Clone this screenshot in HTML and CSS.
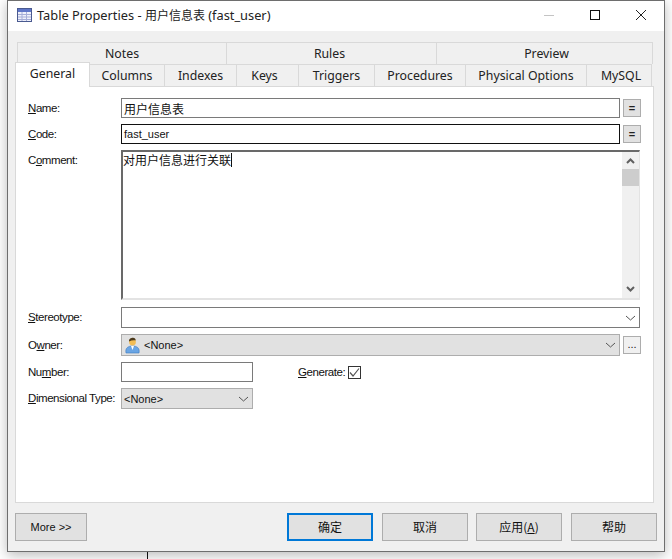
FILE: index.html
```html
<!DOCTYPE html>
<html lang="zh">
<head>
<meta charset="utf-8">
<title>Table Properties</title>
<link rel="stylesheet" href="styles.css">
</head>
<body>
<div class="stray-line"></div>
<div class="window">
  <header class="titlebar">
    <svg class="table-icon" width="15" height="14" viewBox="0 0 15 14">
      <rect x="0.5" y="0.5" width="14" height="13" fill="#eef0fb" stroke="#4a5a90"/>
      <rect x="1" y="1" width="13" height="3" fill="#5f76c8"/>
      <path d="M1 6.500H14M1 9H14M1 11.500H14M5 4V13M9.500 4V13" stroke="#a6aed8" stroke-width="1" fill="none"/>
    </svg>
    <span class="title">Table Properties - <span class="title-cjk">用户信息表</span> (fast_user)</span>
    <div class="controls">
      <svg width="12" height="12" viewBox="0 0 12 12" class="ctl-min"><path d="M1 6.500H11" stroke="#c4c4c4" fill="none"/></svg>
      <svg width="12" height="12" viewBox="0 0 12 12" class="ctl-max"><rect x="1.500" y="1.500" width="9" height="9" fill="none" stroke="#111"/></svg>
      <svg width="12" height="12" viewBox="0 0 12 12" class="ctl-close"><path d="M1 1L11 11M11 1L1 11" stroke="#222" fill="none"/></svg>
    </div>
  </header>
  <div class="body">
    <div class="tabs tabs-back">
      <div class="tab w-notes">Notes</div>
      <div class="tab w-rules">Rules</div>
      <div class="tab w-preview">Preview</div>
    </div>
    <div class="tabs tabs-front">
      <div class="tab active w-general">General</div>
      <div class="tab w-columns">Columns</div>
      <div class="tab w-indexes">Indexes</div>
      <div class="tab w-keys">Keys</div>
      <div class="tab w-triggers">Triggers</div>
      <div class="tab w-procedures">Procedures</div>
      <div class="tab w-physical">Physical Options</div>
      <div class="tab w-mysql">MySQL</div>
    </div>
    <main class="panel">
      <div class="row h20">
        <label class="label"><u>N</u>ame:</label>
        <div class="field w-main b-gray cjk name-field">用户信息表</div>
        <button class="mini">=</button>
      </div>
      <div class="row h20">
        <label class="label"><u>C</u>ode:</label>
        <div class="field w-main b-dark small-text">fast_user</div>
        <button class="mini">=</button>
      </div>
      <div class="row comment-row">
        <label class="label">C<u>o</u>mment:</label>
        <div class="comment">
          <div class="comment-text cjk">对用户信息进行关联<span class="caret"></span></div>
          <div class="scrollbar">
            <svg width="17" height="17" viewBox="0 0 17 17"><path d="M5 11L8.500 7.500L12 11" fill="none" stroke="#606060" stroke-width="2"/></svg>
            <div class="thumb"></div>
            <svg class="scroll-down" width="17" height="18" viewBox="0 0 17 18"><path d="M5 7L8.500 10.500L12 7" fill="none" stroke="#606060" stroke-width="2"/></svg>
          </div>
        </div>
      </div>
      <div class="row stereo-row">
        <label class="label"><u>S</u>tereotype:</label>
        <div class="field w-full b-gray">
          <svg class="chev" width="11" height="6" viewBox="0 0 11 6"><path d="M1 1L5.500 5L10 1" fill="none" stroke="#555"/></svg>
        </div>
      </div>
      <div class="row owner-row">
        <label class="label">O<u>w</u>ner:</label>
        <div class="field w-main combo">
          <svg class="person" width="15" height="17" viewBox="0 0 15 17">
            <path d="M1 16C0 11 3 9 7.500 9C12 9 15 11 14 16Z" fill="#6aa5e4" stroke="#3d79bd" stroke-width="0.6"/>
            <path d="M6 9L7.500 13L9 9Z" fill="#fff"/>
            <circle cx="7.500" cy="5" r="3.400" fill="#f3bd55"/>
            <path d="M4 4.500C4 1.500 6 .8 8 .8C10 .8 11 2.500 10.500 3.500C8.500 3 6 3.500 4 4.500Z" fill="#4c3a1c"/>
          </svg>
          <span class="combo-text">&lt;None&gt;</span>
          <svg class="chev" width="11" height="6" viewBox="0 0 11 6"><path d="M1 1L5.500 5L10 1" fill="none" stroke="#555"/></svg>
        </div>
        <button class="mini dots">...</button>
      </div>
      <div class="row h20">
        <label class="label">Nu<u>m</u>ber:</label>
        <div class="field w-small b-gray"></div>
        <span class="gen-label"><u>G</u>enerate:</span>
        <span class="check">
          <svg width="13" height="13" viewBox="0 0 13 13"><path d="M2 6.500L5 10L11 2.500" fill="none" stroke="#555" stroke-width="1.200"/></svg>
        </span>
      </div>
      <div class="row dim-row">
        <label class="label dim-label"><u>D</u>imensional Type:</label>
        <div class="field w-small combo">
          <span class="combo-text">&lt;None&gt;</span>
          <svg class="chev" width="11" height="6" viewBox="0 0 11 6"><path d="M1 1L5.500 5L10 1" fill="none" stroke="#555"/></svg>
        </div>
      </div>
    </main>
    <footer class="footer">
      <button class="btn btn-more">More &gt;&gt;</button>
      <div class="footer-right">
        <button class="btn btn-wide btn-default cjk">确定</button>
        <button class="btn btn-wide cjk">取消</button>
        <button class="btn btn-wide cjk">应用(<u>A</u>)</button>
        <button class="btn btn-wide cjk">帮助</button>
      </div>
    </footer>
  </div>
</div>
</body>
</html>
```
FILE: styles.css
```css
* { box-sizing: border-box; }
html, body { margin: 0; padding: 0; }
body {
  position: relative;
  width: 672px;
  height: 559px;
  overflow: hidden;
  background: #fff;
  font-family: "Liberation Sans", "Noto Sans CJK SC", sans-serif;
  font-size: 12px;
  color: #111;
}
.stray-line {
  position: absolute;
  left: 147px;
  top: 551px;
  width: 1px;
  height: 8px;
  background: #111;
}
.window {
  position: relative;
  margin-left: 7px;
  width: 658px;
  height: 552px;
  border: 1px solid #6e6e6e;
  background: #f0f0f0;
  box-shadow: 0 3px 12px rgba(0, 0, 0, .28);
  display: flex;
  flex-direction: column;
}
.titlebar {
  height: 30px;
  flex: none;
  background: #fff;
  display: flex;
  align-items: center;
  padding: 0 0 2px 9px;
}
.table-icon { margin-right: 5px; }
.title {
  font-family: "Noto Sans", "Noto Sans CJK SC", sans-serif;
  font-size: 12.800px;
  color: #222;
}
.title-cjk { font-size: 12px; }
.controls {
  margin-left: auto;
  display: flex;
  align-items: center;
}
.ctl-min { margin-right: 34px; }
.ctl-max { margin-right: 34px; }
.ctl-close { margin-right: 17px; }
.body {
  flex: 1;
  display: flex;
  flex-direction: column;
  padding: 11px 0 0 7px;
}
.tabs {
  display: flex;
  height: 22px;
  flex: none;
  font-family: "Noto Sans", sans-serif;
  font-size: 12.300px;
  color: #222;
}
.tabs-back { margin-left: 2px; }
.tab {
  display: flex;
  align-items: center;
  justify-content: center;
  border: 1px solid #d9d9d9;
  border-left: 0;
  border-bottom: 0;
  background: #f0f0f0;
}
.tabs-back .tab:first-child { border-left: 1px solid #d9d9d9; }
.tab.active {
  position: relative;
  height: 25px;
  margin-top: -2px;
  background: #fff;
  border-left: 1px solid #d9d9d9;
  padding-bottom: 4px;
  z-index: 2;
}
.w-notes { width: 210px; }
.w-rules { width: 210px; padding-right: 4px; }
.w-preview { width: 216px; padding-left: 4px; }
.w-general { width: 75px; }
.w-columns { width: 75px; }
.w-indexes { width: 72px; }
.w-keys { width: 62px; padding-right: 6px; }
.w-triggers { width: 76px; }
.w-procedures { width: 91px; }
.w-physical { width: 121px; }
.w-mysql { width: 65px; padding-left: 4px; }
.panel {
  width: 639px;
  height: 417px;
  flex: none;
  background: #fff;
  border: 1px solid #d9d9d9;
  padding: 11px 0 0 12px;
  display: flex;
  flex-direction: column;
  gap: 6px;
}
.row {
  display: flex;
  align-items: center;
  flex: none;
}
.h20 { height: 20px; }
.comment-row { height: 150px; align-items: flex-start; }
.comment-row .label { margin-top: 4px; }
.stereo-row { height: 21px; margin-top: 1px; }
.stereo-row .label { padding-bottom: 2px; }
.owner-row { height: 22px; }
.dim-row { height: 21px; }
.dim-label { padding-bottom: 2px; }
.label {
  width: 93px;
  flex: none;
  font-size: 11.500px;
  letter-spacing: -.43px;
  color: #111;
  white-space: nowrap;
}
.field {
  height: 100%;
  flex: none;
  display: flex;
  align-items: center;
  background: #fff;
  padding-left: 2px;
}
.name-field { padding-left: 2px; }
.small-text { font-size: 11px; }
.w-main { width: 499px; }
.w-full { width: 519px; }
.w-small { width: 132px; }
.b-gray { border: 1px solid #7a7a7a; }
.b-dark { border: 1px solid #111; }
.cjk { font-family: "Noto Sans CJK SC", sans-serif; font-size: 12px; }
.mini {
  width: 18px;
  height: 18px;
  margin-left: 3px;
  padding: 0;
  border: 1px solid #adadad;
  background: #e1e1e1;
  font-family: "Liberation Sans", sans-serif;
  font-size: 11px;
  font-weight: bold;
  color: #222;
  line-height: 1;
}
.mini.dots { background: #f0f0f0; font-weight: normal; padding-bottom: 2px; }
.comment {
  width: 519px;
  height: 150px;
  display: flex;
  border-top: 2px solid #696969;
  border-left: 2px solid #696969;
  border-right: 1px solid #e3e3e3;
  border-bottom: 2px solid #e3e3e3;
}
.comment-text { flex: 1; padding: 0; line-height: 15px; }
.caret {
  display: inline-block;
  width: 1px;
  height: 14px;
  background: #111;
  vertical-align: -2px;
}
.scrollbar {
  width: 17px;
  flex: none;
  background: #f0f0f0;
  display: flex;
  flex-direction: column;
}
.thumb { width: 100%; height: 17px; background: #cdcdcd; }
.scroll-down { margin-top: auto; }
.chev { margin-left: auto; margin-right: 3px; }
.combo {
  background: #e1e1e1;
  border: 1px solid #adadad;
}
.person { margin-left: 1px; margin-right: 4px; flex: none; }
.combo-text { font-size: 11px; }
.gen-label {
  margin-left: 45px;
  width: 50px;
  flex: none;
  font-size: 11.500px;
  letter-spacing: -.43px;
}
.check {
  width: 13px;
  height: 13px;
  border: 1px solid #333;
  display: flex;
  align-items: center;
  justify-content: center;
  flex: none;
}
.check svg { flex: none; }
.footer {
  display: flex;
  justify-content: space-between;
  margin-top: 10px;
  width: 642px;
}
.footer-right { display: flex; gap: 8px; }
.btn {
  height: 28px;
  padding: 0;
  border: 1px solid #adadad;
  background: #e1e1e1;
  font-family: "Liberation Sans", "Noto Sans CJK SC", sans-serif;
  font-size: 11px;
  color: #111;
}
.btn-more { width: 72px; }
.btn-wide { width: 86px; }
.btn-wide:first-child, .btn-wide:nth-child(3) { margin-right: 1px; }
.btn-default { border: 2px solid #0078d7; }
.btn.cjk { font-family: "Noto Sans CJK SC", sans-serif; font-size: 12px; padding-bottom: 2px; }
```
